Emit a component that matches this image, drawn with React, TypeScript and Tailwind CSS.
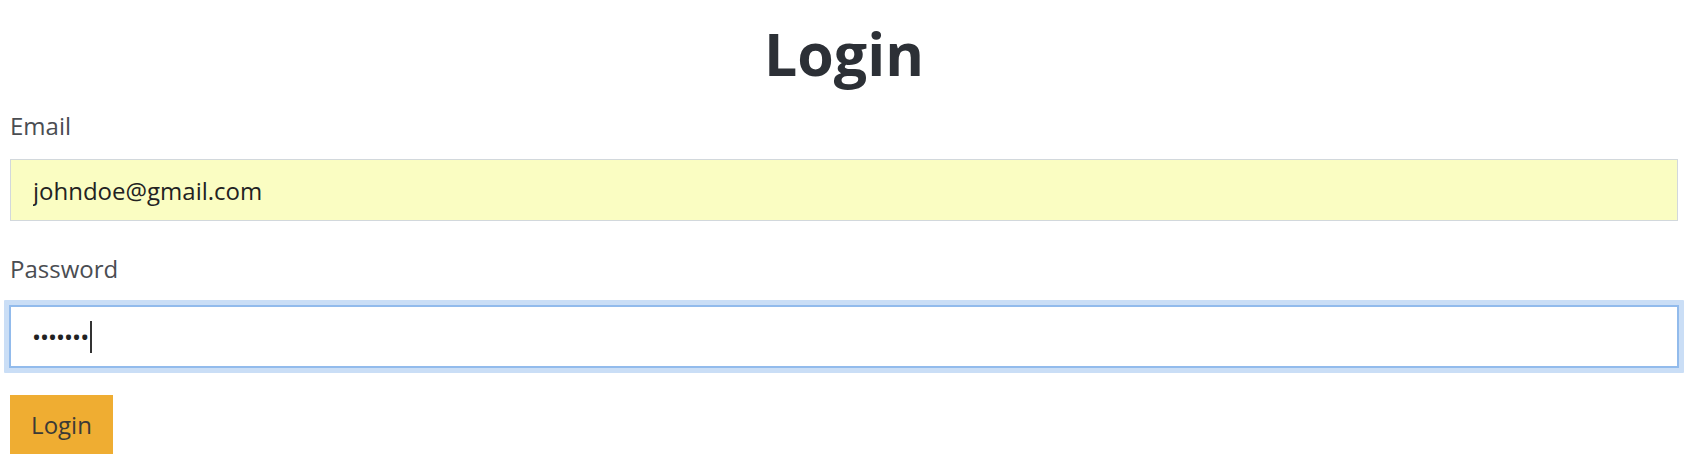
import { useState } from 'react';

export default function App() {
  const [email, setEmail] = useState('johndoe@gmail.com');

  return (
    <div
      className="min-h-screen bg-white pl-[10px] pr-[18px] pt-[18px]"
      style={{ fontFamily: '"Open Sans", "Noto Sans", sans-serif' }}
    >
      <h1 className="text-center text-[59px] leading-[70px] font-bold text-[#2c3036]">Login</h1>

      <form className="mt-[23px]" onSubmit={(e) => e.preventDefault()}>
        <label htmlFor="email" className="block text-[24px] leading-[30px] text-[#4a4d52]">
          Email
        </label>
        <input
          id="email"
          type="email"
          value={email}
          onChange={(e) => setEmail(e.target.value)}
          className="mt-[18px] block h-[62px] w-full border border-[#d2d8dc] bg-[#fafdc2] px-[22px] text-[24px] text-[#222] outline-none"
        />

        <label htmlFor="password" className="mt-[33px] block text-[24px] leading-[30px] text-[#4a4d52]">
          Password
        </label>
        <div className="mt-[16px] rounded-[1px] bg-[#cadef6] p-[5px] -mx-[6px]">
          <div
            id="password"
            role="textbox"
            className="flex h-[63px] items-center border-2 border-[#92bbec] bg-white px-[21px]"
          >
            <span className="text-[24px] tracking-[-1px] text-[#222]">•••••••</span>
            <span className="ml-[2px] h-[32px] w-[2px] bg-[#333]" />
          </div>
        </div>

        <button
          type="submit"
          className="mt-[22px] h-[59px] w-[103px] bg-[#efad32] text-[24px] text-[#3b3a36]"
        >
          Login
        </button>
      </form>
    </div>
  );
}
